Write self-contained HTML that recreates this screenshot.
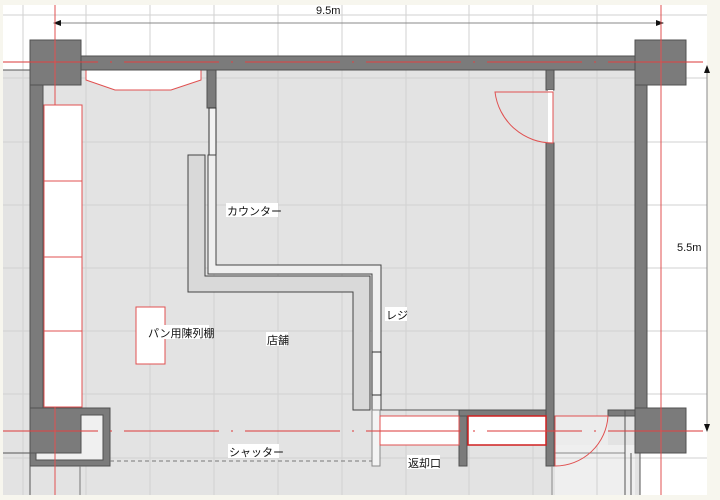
<!DOCTYPE html>
<html><head><meta charset="utf-8"><style>
html,body{margin:0;padding:0;background:#f7f6ee;}
svg{display:block;}
text{font-family:"Liberation Sans","Noto Sans CJK JP",sans-serif;font-size:11px;fill:#111;}
</style></head><body>
<svg width="720" height="500" viewBox="0 0 720 500" xmlns="http://www.w3.org/2000/svg">
<rect x="3" y="5" width="704" height="490" fill="#fff"/>
<rect x="3" y="70" width="637" height="425" fill="#e3e3e3"/>
<rect x="555" y="445" width="80" height="50" fill="#efefef"/>
<g stroke="#d2d2d2" stroke-width="1">
<line x1="23" y1="5" x2="23" y2="495"/><line x1="86" y1="5" x2="86" y2="495"/><line x1="150" y1="5" x2="150" y2="495"/><line x1="214" y1="5" x2="214" y2="495"/><line x1="278" y1="5" x2="278" y2="495"/><line x1="342" y1="5" x2="342" y2="495"/><line x1="406" y1="5" x2="406" y2="495"/><line x1="469" y1="5" x2="469" y2="495"/><line x1="533" y1="5" x2="533" y2="495"/><line x1="597" y1="5" x2="597" y2="495"/><line x1="661" y1="5" x2="661" y2="495"/>
<line x1="3" y1="15" x2="707" y2="15"/><line x1="3" y1="78" x2="707" y2="78"/><line x1="3" y1="142" x2="707" y2="142"/><line x1="3" y1="205" x2="707" y2="205"/><line x1="3" y1="268" x2="707" y2="268"/><line x1="3" y1="331" x2="707" y2="331"/><line x1="3" y1="394" x2="707" y2="394"/><line x1="3" y1="458" x2="707" y2="458"/>
</g>
<line x1="3" y1="70" x2="30" y2="70" stroke="#555"/>
<!-- dimension lines -->
<g stroke="#888" stroke-width="1">
<line x1="57" y1="23" x2="660" y2="23"/>
<line x1="707" y1="68" x2="707" y2="430"/>
</g>
<polygon points="53,23 61,20 61,26" fill="#111"/>
<polygon points="664,23 656,20 656,26" fill="#111"/>
<polygon points="707,65 704,73 710,73" fill="#111"/>
<polygon points="707,432 704,424 710,424" fill="#111"/>
<text x="316" y="14">9.5m</text>
<text x="677" y="251">5.5m</text>
<!-- shelves -->
<rect x="44" y="105" width="38" height="302" fill="#fff" stroke="#e05050"/>
<g stroke="#e05050"><line x1="44" y1="181" x2="82" y2="181"/><line x1="44" y1="257" x2="82" y2="257"/><line x1="44" y1="331" x2="82" y2="331"/></g>
<polygon points="86,70 86,80 115,90 171,90 201,80 201,70" fill="#fff" stroke="#e05050"/>
<rect x="136" y="307" width="29" height="57" fill="#fff" stroke="#e05050"/>
<!-- walls -->
<g fill="#7b7b7b" stroke="#505050" stroke-width="1">
<rect x="30" y="40" width="51" height="45"/>
<rect x="81" y="56" width="555" height="14"/>
<rect x="635" y="40" width="51" height="45"/>
<rect x="30" y="85" width="13" height="324"/>
<rect x="207" y="70" width="9" height="38"/>
<rect x="546" y="70" width="8" height="20"/>
<rect x="546" y="143" width="8" height="323"/>
<rect x="635" y="85" width="12" height="325"/>
<rect x="635" y="408" width="51" height="45"/>
<rect x="608" y="410" width="27" height="6"/>
<rect x="459" y="410" width="87" height="6"/>
<rect x="459" y="416" width="8" height="50"/>
<path d="M30,408 H110 V466 H30 Z"/>
</g>
<path d="M81,415 H103 V460 H36 V453 H81 Z" fill="#f0f0f0" stroke="#505050"/>
<!-- windows in interior wall -->
<rect x="209" y="108" width="7" height="47" fill="#f2f2f2" stroke="#333"/>
<!-- counter -->
<polygon points="188,155 205,155 205,276 370,276 370,410 353,410 353,292 188,292" fill="#d9d9d9" stroke="#444"/>
<polygon points="208,155 216,155 216,265 381,265 381,410 372,410 372,274 208,274" fill="#efefef" stroke="#444"/>
<line x1="205" y1="276" x2="353" y2="292" stroke="none"/>
<line x1="188" y1="292" x2="353" y2="292" stroke="#444"/>
<rect x="372" y="352" width="9" height="43" fill="#f2f2f2" stroke="#333"/>
<line x1="381" y1="410" x2="459" y2="410" stroke="#555"/>
<rect x="372" y="410" width="8" height="56" fill="#f4f4f4" stroke="#888"/>
<!-- bottom windows -->
<rect x="380" y="416" width="79" height="29" fill="#fff" stroke="#e05050"/>
<rect x="468" y="416" width="78" height="29" fill="#fff" stroke="#d02020" stroke-width="1.5"/>
<rect x="555" y="416" width="53" height="29" fill="#ececec" stroke="none"/>
<line x1="555" y1="453" x2="625" y2="453" stroke="#888"/>
<line x1="625" y1="410" x2="625" y2="495" stroke="#555"/>
<line x1="631" y1="453" x2="631" y2="495" stroke="#555"/>
<line x1="640" y1="453" x2="640" y2="495" stroke="#555"/>
<line x1="552" y1="466" x2="552" y2="495" stroke="#888"/>
<!-- doors -->
<rect x="548" y="90" width="5" height="53" fill="#fff"/>
<path d="M553,92 H495 A58,58 0 0 0 553,143 Z" fill="none" stroke="#e05050"/>
<path d="M555,416 H608 A53,53 0 0 1 555,466 Z" fill="none" stroke="#e05050"/>
<!-- shutter -->
<line x1="110" y1="461" x2="372" y2="461" stroke="#777" stroke-dasharray="4,3"/>
<line x1="3" y1="453" x2="36" y2="453" stroke="#555"/>
<line x1="30" y1="466" x2="30" y2="495" stroke="#555"/>
<line x1="80" y1="466" x2="80" y2="495" stroke="#777"/>
<!-- red center lines -->
<g stroke="#d44" stroke-width="1.3" stroke-dasharray="95,12,2,12" opacity="0.85">
<line x1="3" y1="62" x2="707" y2="62"/>
<line x1="3" y1="431" x2="707" y2="431"/>
</g>
<g stroke="#e05050" stroke-width="1">
<line x1="55" y1="5" x2="55" y2="105"/>
<line x1="55" y1="407" x2="55" y2="495"/>
<line x1="661" y1="5" x2="661" y2="495"/>
</g>
<!-- labels -->
<g>
<rect x="226" y="203" width="52" height="14" fill="#fff"/><text x="227" y="215">カウンター</text>
<rect x="148" y="325" width="61" height="14" fill="#fff"/><text x="148" y="337">パン用陳列棚</text>
<rect x="266" y="332" width="22" height="14" fill="#fff"/><text x="267" y="344">店舗</text>
<rect x="385" y="307" width="22" height="14" fill="#fff"/><text x="386" y="319">レジ</text>
<rect x="228" y="444" width="51" height="14" fill="#fff"/><text x="229" y="456">シャッター</text>
<rect x="407" y="455" width="33" height="14" fill="#fff"/><text x="408" y="467">返却口</text>
</g>
</svg>
</body></html>
